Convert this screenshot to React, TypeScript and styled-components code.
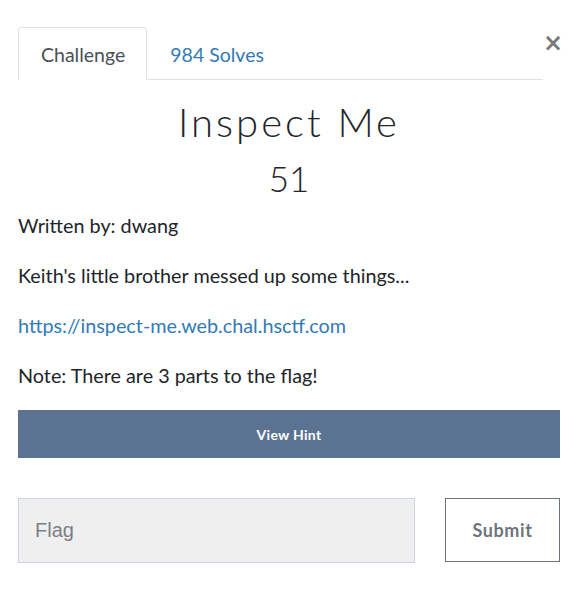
import React, { useState } from "react";
import styled, { createGlobalStyle } from "styled-components";

const GlobalStyle = createGlobalStyle`
  html, body {
    margin: 0;
    padding: 0;
    background: #ffffff;
  }
  body {
    font-family: Lato, "Open Sans", sans-serif;
    color: #212529;
  }
  * {
    box-sizing: border-box;
  }
`;

const Modal = styled.div`
  width: 586px;
  padding: 27px 26px 0 18px;
`;

const Header = styled.div`
  display: flex;
  align-items: flex-start;
`;

const Nav = styled.div`
  flex: 1;
  display: flex;
  border-bottom: 1px solid #dee2e6;
  height: 53px;
`;

const Tab = styled.button<{ $active?: boolean }>`
  height: 53px;
  padding: 2px 21px 0 22px;
  font-family: Lato, sans-serif;
  font-size: 19.5px;
  background: ${(p) => (p.$active ? "#ffffff" : "transparent")};
  cursor: pointer;
  color: ${(p) => (p.$active ? "#495057" : "#337ab7")};
  border: 1px solid ${(p) => (p.$active ? "#dee2e6" : "transparent")};
  border-bottom-color: ${(p) => (p.$active ? "#ffffff" : "transparent")};
  border-radius: 4px 4px 0 0;
  margin-bottom: -1px;
`;

const Close = styled.button`
  width: 17px;
  height: 30px;
  margin-top: 1px;
  padding: 0 1px 0 0;
  border: 0;
  background: none;
  color: #7a7a7a;
  font-family: "DejaVu Sans", sans-serif;
  font-size: 24px;
  font-weight: bold;
  line-height: 30px;
  text-align: right;
  cursor: pointer;
`;

const Title = styled.h1`
  margin: 18px 0 0;
  font-family: Lato, sans-serif;
  font-weight: 300;
  font-size: 40px;
  line-height: 48px;
  letter-spacing: 3px;
  text-align: center;
`;

const Points = styled.h2`
  margin: 11px 0 0;
  font-family: Lato, sans-serif;
  font-weight: 300;
  font-size: 35px;
  line-height: 42px;
  text-align: center;
`;

const Text = styled.p`
  margin: 0 0 22px;
  font-size: 19.8px;
  line-height: 28px;
  &:first-of-type {
    margin-top: 12px;
  }
  &:last-of-type {
    margin-bottom: 21px;
  }
`;

const Link = styled.a`
  color: #337ab7;
  text-decoration: none;
`;

const HintButton = styled.button`
  display: block;
  width: 100%;
  height: 48px;
  border: 0;
  background: #5b7290;
  color: #ffffff;
  font-family: Lato, sans-serif;
  font-weight: bold;
  font-size: 14px;
  letter-spacing: 0.3px;
  cursor: pointer;
`;

const FlagRow = styled.form`
  display: flex;
  align-items: flex-start;
  gap: 30px;
  margin-top: 40px;
`;

const FlagInput = styled.input`
  width: 397px;
  height: 65px;
  padding: 0 16px;
  border: 1px solid #ccd5df;
  background: #efefef;
  font-family: "Liberation Sans", Arial, sans-serif;
  font-size: 20px;
  color: #495057;
  outline: none;
  &::placeholder {
    color: #7b8087;
  }
`;

const SubmitButton = styled.button`
  width: 115px;
  height: 64px;
  border: 1px solid #6c757d;
  background: #ffffff;
  color: #6c757d;
  font-family: Lato, sans-serif;
  font-weight: bold;
  font-size: 18px;
  letter-spacing: 0.6px;
  cursor: pointer;
`;

export default function App() {
  const [tab, setTab] = useState("challenge");
  const [flag, setFlag] = useState("");

  return (
    <Modal>
      <GlobalStyle />
      <Header>
        <Nav>
          <Tab $active={tab === "challenge"} onClick={() => setTab("challenge")}>
            Challenge
          </Tab>
          <Tab $active={tab === "solves"} onClick={() => setTab("solves")}>
            984 Solves
          </Tab>
        </Nav>
        <Close aria-label="Close">×</Close>
      </Header>
      <Title>Inspect Me</Title>
      <Points>51</Points>
      <Text>Written by: dwang</Text>
      <Text>Keith's little brother messed up some things...</Text>
      <Text>
        <Link href="#">https://inspect-me.web.chal.hsctf.com</Link>
      </Text>
      <Text>Note: There are 3 parts to the flag!</Text>
      <HintButton type="button">View Hint</HintButton>
      <FlagRow onSubmit={(e) => e.preventDefault()}>
        <FlagInput
          placeholder="Flag"
          value={flag}
          onChange={(e) => setFlag(e.target.value)}
        />
        <SubmitButton type="submit">Submit</SubmitButton>
      </FlagRow>
    </Modal>
  );
}
